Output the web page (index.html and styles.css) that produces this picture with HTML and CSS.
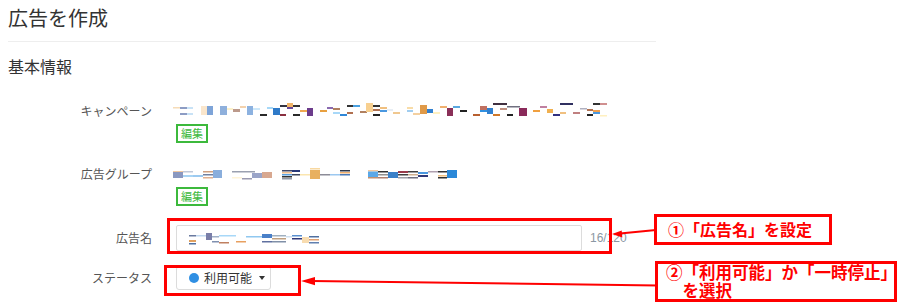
FILE: index.html
```html
<!DOCTYPE html>
<html lang="ja">
<head>
<meta charset="utf-8">
<title>広告を作成</title>
<link rel="stylesheet" href="styles.css">
</head>
<body>
<div class="page">
  <h1 class="title">広告を作成</h1>
  <h2 class="section">基本情報</h2>
  <div class="form">
    <div class="row row-campaign">
      <div class="label">キャンペーン</div>
      <div class="value">
        <svg class="redact" width="440" height="18" viewBox="0 0 440 18" aria-hidden="true">
          <rect x="1" y="5" width="7" height="1.5" fill="#f6dcb8"/>
          <rect x="8" y="5" width="7" height="2" fill="#8d9cc4"/>
          <rect x="8" y="11" width="7" height="2" fill="#8d9cc4"/>
          <rect x="15" y="5" width="6" height="2" fill="#c8e2f6"/>
          <rect x="15" y="11" width="6" height="2" fill="#c8e2f6"/>
          <rect x="29" y="4" width="6" height="9" fill="#fae6cc"/>
          <rect x="35" y="4" width="6" height="9" fill="#7ea4d8"/>
          <rect x="48" y="4" width="7" height="9" fill="#8fb0dc"/>
          <rect x="55" y="6" width="6" height="2" fill="#fdf2cc"/>
          <rect x="61" y="7" width="7" height="3" fill="#bc9a8c"/>
          <rect x="68" y="4" width="6" height="2" fill="#f3d2ae"/>
          <rect x="75" y="4" width="6" height="9" fill="#8db2e0"/>
          <rect x="81" y="6" width="7" height="2" fill="#cde8fa"/>
          <rect x="88" y="12" width="7" height="2" fill="#2a2a2a"/>
          <rect x="95" y="5" width="6" height="2" fill="#a6d8f8"/>
          <rect x="101" y="6" width="7" height="7" fill="#2f7ac8"/>
          <rect x="108" y="3" width="13" height="2" fill="#333340"/>
          <rect x="108" y="12" width="6" height="2" fill="#8a3040"/>
          <rect x="115" y="1" width="6" height="4" fill="#f2b468"/>
          <rect x="115" y="5" width="6" height="2" fill="#6a4a9a"/>
          <rect x="121" y="3" width="7" height="2" fill="#333333"/>
          <rect x="121" y="12" width="7" height="2" fill="#2a2a2a"/>
          <rect x="128" y="8" width="7" height="2" fill="#f0a850"/>
          <rect x="135" y="6" width="6" height="8" fill="#6c3c8c"/>
          <rect x="148" y="8" width="7" height="2" fill="#e8a040"/>
          <rect x="155" y="5" width="6" height="2" fill="#8a6ab0"/>
          <rect x="161" y="6" width="7" height="2" fill="#b08060"/>
          <rect x="161" y="10" width="7" height="2" fill="#a8d8f8"/>
          <rect x="168" y="12" width="7" height="2" fill="#3088d8"/>
          <rect x="175" y="3" width="6" height="2" fill="#333333"/>
          <rect x="175" y="10" width="6" height="2" fill="#b07050"/>
          <rect x="181" y="3" width="7" height="2" fill="#4aa0e0"/>
          <rect x="188" y="9" width="7" height="2" fill="#b08060"/>
          <rect x="194" y="1" width="7" height="9" fill="#f8d090"/>
          <rect x="201" y="3" width="7" height="2" fill="#333333"/>
          <rect x="201" y="7" width="7" height="2" fill="#b07050"/>
          <rect x="201" y="12" width="7" height="2" fill="#222222"/>
          <rect x="208" y="5" width="7" height="2" fill="#f0c080"/>
          <rect x="208" y="8" width="7" height="2" fill="#4a98e0"/>
          <rect x="215" y="7" width="6" height="2" fill="#e8eef4"/>
          <rect x="221" y="10" width="7" height="2" fill="#f0c890"/>
          <rect x="235" y="5" width="6" height="2" fill="#f8dca8"/>
          <rect x="235" y="8" width="6" height="2" fill="#a0cdf0"/>
          <rect x="241" y="11" width="7" height="2" fill="#f4d0a0"/>
          <rect x="248" y="3" width="7" height="9" fill="#e09a48"/>
          <rect x="255" y="7" width="6" height="4" fill="#3080d0"/>
          <rect x="261" y="10" width="7" height="2" fill="#fff0c0"/>
          <rect x="268" y="4" width="7" height="2" fill="#f0b070"/>
          <rect x="275" y="6" width="6" height="8" fill="#8a3058"/>
          <rect x="281" y="4" width="7" height="2" fill="#5aa8e0"/>
          <rect x="288" y="8" width="7" height="2" fill="#222222"/>
          <rect x="301" y="12" width="7" height="2" fill="#b86030"/>
          <rect x="308" y="4" width="7" height="4" fill="#c07060"/>
          <rect x="308" y="8" width="7" height="2" fill="#3090e0"/>
          <rect x="315" y="6" width="6" height="6" fill="#3080d0"/>
          <rect x="321" y="1" width="14" height="2" fill="#403040"/>
          <rect x="328" y="6" width="7" height="2" fill="#c09080"/>
          <rect x="321" y="12" width="7" height="2" fill="#d07828"/>
          <rect x="335" y="12" width="6" height="2" fill="#222222"/>
          <rect x="335" y="4" width="13" height="1.5" fill="#707080"/>
          <rect x="347" y="6" width="8" height="8" fill="#8a2a5a"/>
          <rect x="361" y="8" width="7" height="2" fill="#f0a040"/>
          <rect x="368" y="4" width="7" height="2" fill="#c080a0"/>
          <rect x="375" y="7" width="6" height="4" fill="#f0b050"/>
          <rect x="381" y="12" width="7" height="2" fill="#303080"/>
          <rect x="388" y="1" width="13" height="2" fill="#303060"/>
          <rect x="388" y="10" width="6" height="2" fill="#f0c080"/>
          <rect x="401" y="10" width="7" height="2" fill="#c08080"/>
          <rect x="408" y="6" width="7" height="1.5" fill="#b0b0c0"/>
          <rect x="415" y="7" width="6" height="2" fill="#b07050"/>
          <rect x="415" y="12" width="6" height="2" fill="#222222"/>
          <rect x="421" y="1" width="7" height="2" fill="#333333"/>
          <rect x="421" y="8" width="7" height="2" fill="#f0a050"/>
          <rect x="421" y="10" width="7" height="2" fill="#4a98e0"/>
          <rect x="428" y="1" width="7" height="2" fill="#d09090"/>
          <rect x="428" y="13" width="7" height="1.5" fill="#fff0c0"/>
        </svg>
        <span class="tag">編集</span>
      </div>
    </div>

    <div class="row row-group">
      <div class="label">広告グループ</div>
      <div class="value">
        <svg class="redact" width="440" height="18" viewBox="0 0 440 18" aria-hidden="true">
          <rect x="1" y="6" width="10" height="1.5" fill="#f0c8a0"/>
          <rect x="1" y="7" width="10" height="6" fill="#8a98c0"/>
          <rect x="11" y="6" width="10" height="1.5" fill="#c0c8d8"/>
          <rect x="11" y="10" width="10" height="2" fill="#a8d4f4"/>
          <rect x="21" y="10" width="10" height="2" fill="#9ccaf0"/>
          <rect x="31" y="6" width="10" height="1.5" fill="#d0a080"/>
          <rect x="31" y="9" width="10" height="1.5" fill="#7080a0"/>
          <rect x="31" y="12" width="10" height="1.5" fill="#e0b090"/>
          <rect x="41" y="5" width="9" height="8" fill="#8aaedc"/>
          <rect x="60" y="6" width="23" height="1.5" fill="#9aa0b0"/>
          <rect x="60" y="12" width="10" height="1.5" fill="#fff4d8"/>
          <rect x="70" y="13" width="10" height="1.5" fill="#9a9ab0"/>
          <rect x="80" y="8" width="10" height="5" fill="#9aa4c8"/>
          <rect x="90" y="7" width="10" height="6" fill="#d8a890"/>
          <rect x="110" y="5" width="10" height="1.5" fill="#404868"/>
          <rect x="110" y="7" width="10" height="1.5" fill="#f0c090"/>
          <rect x="110" y="9" width="10" height="1.5" fill="#5aa0e0"/>
          <rect x="110" y="11" width="10" height="1.5" fill="#333333"/>
          <rect x="110" y="13" width="10" height="1.5" fill="#9098a8"/>
          <rect x="120" y="5" width="8" height="2" fill="#283878"/>
          <rect x="120" y="9" width="8" height="1.5" fill="#404860"/>
          <rect x="128" y="9" width="10" height="1.5" fill="#fbe6b0"/>
          <rect x="138" y="3" width="10" height="1.5" fill="#f8d8a0"/>
          <rect x="138" y="5" width="10" height="9" fill="#e8b060"/>
          <rect x="148" y="9" width="10" height="1.5" fill="#8c8c98"/>
          <rect x="158" y="9" width="10" height="1.5" fill="#9cc8f0"/>
          <rect x="168" y="5" width="10" height="1.5" fill="#303848"/>
          <rect x="168" y="7" width="10" height="1.5" fill="#f0b070"/>
          <rect x="168" y="9" width="10" height="1.5" fill="#4a7ab8"/>
          <rect x="196" y="5" width="10" height="1.5" fill="#f0c8a0"/>
          <rect x="196" y="6.5" width="10" height="5.5" fill="#5aa8e8"/>
          <rect x="196" y="12" width="10" height="1.5" fill="#c09070"/>
          <rect x="206" y="6" width="10" height="1.5" fill="#333333"/>
          <rect x="206" y="9" width="10" height="1.5" fill="#909090"/>
          <rect x="206" y="12" width="10" height="1.5" fill="#b08070"/>
          <rect x="216" y="7" width="10" height="6" fill="#3a80c8"/>
          <rect x="226" y="6" width="10" height="2" fill="#9a3a4a"/>
          <rect x="226" y="9" width="10" height="1.5" fill="#404040"/>
          <rect x="226" y="12" width="10" height="1.5" fill="#a0a0a8"/>
          <rect x="236" y="6" width="10" height="1.5" fill="#404040"/>
          <rect x="236" y="9" width="10" height="1.5" fill="#d0b090"/>
          <rect x="236" y="12" width="10" height="1.5" fill="#707080"/>
          <rect x="246" y="7" width="10" height="2" fill="#4a98e0"/>
          <rect x="246" y="10" width="10" height="2" fill="#303878"/>
          <rect x="256" y="6" width="10" height="1.5" fill="#b0a0b0"/>
          <rect x="266" y="6" width="9" height="1.5" fill="#333333"/>
          <rect x="266" y="10" width="9" height="1.5" fill="#f0c080"/>
          <rect x="266" y="12" width="9" height="1.5" fill="#303030"/>
          <rect x="275" y="5" width="10" height="8" fill="#2a88d8"/>
        </svg>
        <span class="tag">編集</span>
      </div>
    </div>

    <div class="row row-name">
      <div class="label">広告名</div>
      <div class="name-field">
        <div class="input">
          <svg width="132" height="24" viewBox="0 0 132 24" aria-hidden="true">
            <rect x="0" y="9" width="7" height="1.5" fill="#6a7aa0"/>
            <rect x="0" y="14" width="7" height="2" fill="#e0a060"/>
            <rect x="0" y="17" width="7" height="1.5" fill="#5070a0"/>
            <rect x="7" y="9" width="10" height="1.5" fill="#c0d8f0"/>
            <rect x="17" y="7" width="6" height="7" fill="#7a7ea8"/>
            <rect x="23" y="10" width="7" height="1.5" fill="#a0b0c8"/>
            <rect x="23" y="15" width="7" height="1.5" fill="#8090b0"/>
            <rect x="30" y="9" width="17" height="1.5" fill="#a8d8f8"/>
            <rect x="30" y="16" width="10" height="1.5" fill="#c08060"/>
            <rect x="47" y="15" width="10" height="1.5" fill="#e8a060"/>
            <rect x="57" y="10" width="16" height="1.5" fill="#90c8f0"/>
            <rect x="73" y="8" width="10" height="4" fill="#4a80c8"/>
            <rect x="73" y="15" width="10" height="1.5" fill="#6070a0"/>
            <rect x="83" y="9" width="14" height="1.5" fill="#a0b0c0"/>
            <rect x="83" y="12" width="14" height="1.5" fill="#c0a080"/>
            <rect x="83" y="15" width="14" height="1.5" fill="#8090a8"/>
            <rect x="97" y="10" width="6" height="1.5" fill="#d0e0f0"/>
            <rect x="103" y="9" width="10" height="1.5" fill="#5a90d0"/>
            <rect x="103" y="12" width="10" height="1.5" fill="#303878"/>
            <rect x="113" y="11" width="7" height="6" fill="#f8dcb0"/>
            <rect x="120" y="10" width="10" height="1.5" fill="#5070a0"/>
            <rect x="120" y="13" width="10" height="1.5" fill="#e0a070"/>
            <rect x="120" y="16" width="10" height="1.5" fill="#6080b0"/>
          </svg>
        </div>
        <span class="counter">16/120</span>
      </div>
    </div>

    <div class="row row-status">
      <div class="label">ステータス</div>
      <div class="value">
        <div class="select">
          <span class="dot"></span>
          <span class="select-text">利用可能</span>
          <span class="caret"></span>
        </div>
      </div>
    </div>
  </div>
</div>

<div class="mark mark-name"></div>
<div class="mark mark-status"></div>
<svg class="arrows" width="900" height="307" viewBox="0 0 900 307" aria-hidden="true">
  <line x1="656" y1="230" x2="620" y2="233.4" stroke="#ff0000" stroke-width="2"/>
  <polygon points="612,234 622.3,237.6 621.7,230.6" fill="#ff0000"/>
  <line x1="658" y1="285.5" x2="312" y2="281.1" stroke="#ff0000" stroke-width="2"/>
  <polygon points="301,281 315,285.2 315,277" fill="#ff0000"/>
</svg>
<div class="callout callout-1">①「広告名」を設定</div>
<div class="callout callout-2">②「利用可能」か「一時停止」<br>　を選択</div>
</body>
</html>
```

FILE: styles.css
```css
* {
  box-sizing: border-box;
}

html,
body {
  margin: 0;
  padding: 0;
}

body {
  position: relative;
  width: 900px;
  height: 307px;
  overflow: hidden;
  background: #ffffff;
  font-family: "Noto Sans CJK JP", "Noto Sans", sans-serif;
  color: #333333;
}

.page {
  width: 664px;
  padding: 6px 8px 0;
}

.title {
  margin: 0;
  padding-bottom: 11px;
  border-bottom: 1px solid #eeeeee;
  font-size: 20px;
  font-weight: normal;
  line-height: 24px;
  color: #333333;
}

.section {
  margin: 14px 0 0;
  font-size: 16px;
  font-weight: normal;
  line-height: 20px;
  color: #333333;
}

.form {
  display: flex;
  flex-direction: column;
  margin-top: 26px;
}

.row {
  display: grid;
  grid-template-columns: 144px auto;
  column-gap: 24px;
  align-items: start;
}

.label {
  font-size: 12px;
  line-height: 18px;
  text-align: right;
  color: #555555;
}

.value {
  display: flex;
  flex-direction: column;
  align-items: flex-start;
}

.redact {
  display: block;
  margin-left: -4px;
}

.tag {
  margin-top: 4px;
  height: 19px;
  padding: 0 3px;
  border: 2px solid #3cb93c;
  color: #3cb93c;
  font-size: 11px;
  line-height: 15px;
}

.row-group {
  margin-top: 22px;
}

.row-name {
  margin-top: 19px;
}

.row-name .label {
  line-height: 26px;
}

.name-field {
  display: flex;
  align-items: center;
}

.input {
  display: flex;
  align-items: center;
  width: 406px;
  height: 26px;
  padding-left: 12px;
  border: 1px solid #dcdcdc;
  border-radius: 2px;
  background: #ffffff;
}

.input svg {
  display: block;
}

.counter {
  margin-left: 8px;
  font-family: "Liberation Sans", Arial, sans-serif;
  font-size: 12px;
  line-height: 26px;
  color: #8b97a3;
}

.row-status {
  margin-top: 15px;
}

.row-status .label {
  line-height: 24px;
}

.select {
  display: flex;
  align-items: center;
  gap: 5px;
  width: 95px;
  height: 24px;
  padding-left: 12px;
  border: 1px solid #dcdcdc;
  border-radius: 3px;
  background: #ffffff;
  font-size: 12px;
  color: #333333;
}

.dot {
  width: 10px;
  height: 10px;
  border-radius: 50%;
  background: #2f8fe3;
}

.select-text {
  line-height: 22px;
}

.caret {
  width: 0;
  height: 0;
  margin-left: 2px;
  border-left: 3.5px solid transparent;
  border-right: 3.5px solid transparent;
  border-top: 4px solid #333333;
}

.mark {
  position: absolute;
  border: 3px solid #ff0000;
}

.mark-name {
  left: 167px;
  top: 218px;
  width: 445px;
  height: 36px;
}

.mark-status {
  left: 164px;
  top: 265px;
  width: 137px;
  height: 31px;
}

.arrows {
  position: absolute;
  left: 0;
  top: 0;
}

.callout {
  position: absolute;
  border: 3px solid #ff0000;
  background: #ffffff;
  color: #ff0000;
  font-weight: bold;
  white-space: pre;
  overflow: hidden;
}

.callout-1 {
  left: 654px;
  top: 214px;
  width: 178px;
  height: 31px;
  padding-left: 11px;
  font-size: 16px;
  line-height: 25px;
}

.callout-2 {
  left: 655px;
  top: 261px;
  width: 242px;
  height: 41px;
  padding: 0 0 0 8px;
  font-size: 16.5px;
  line-height: 17.5px;
}
```
